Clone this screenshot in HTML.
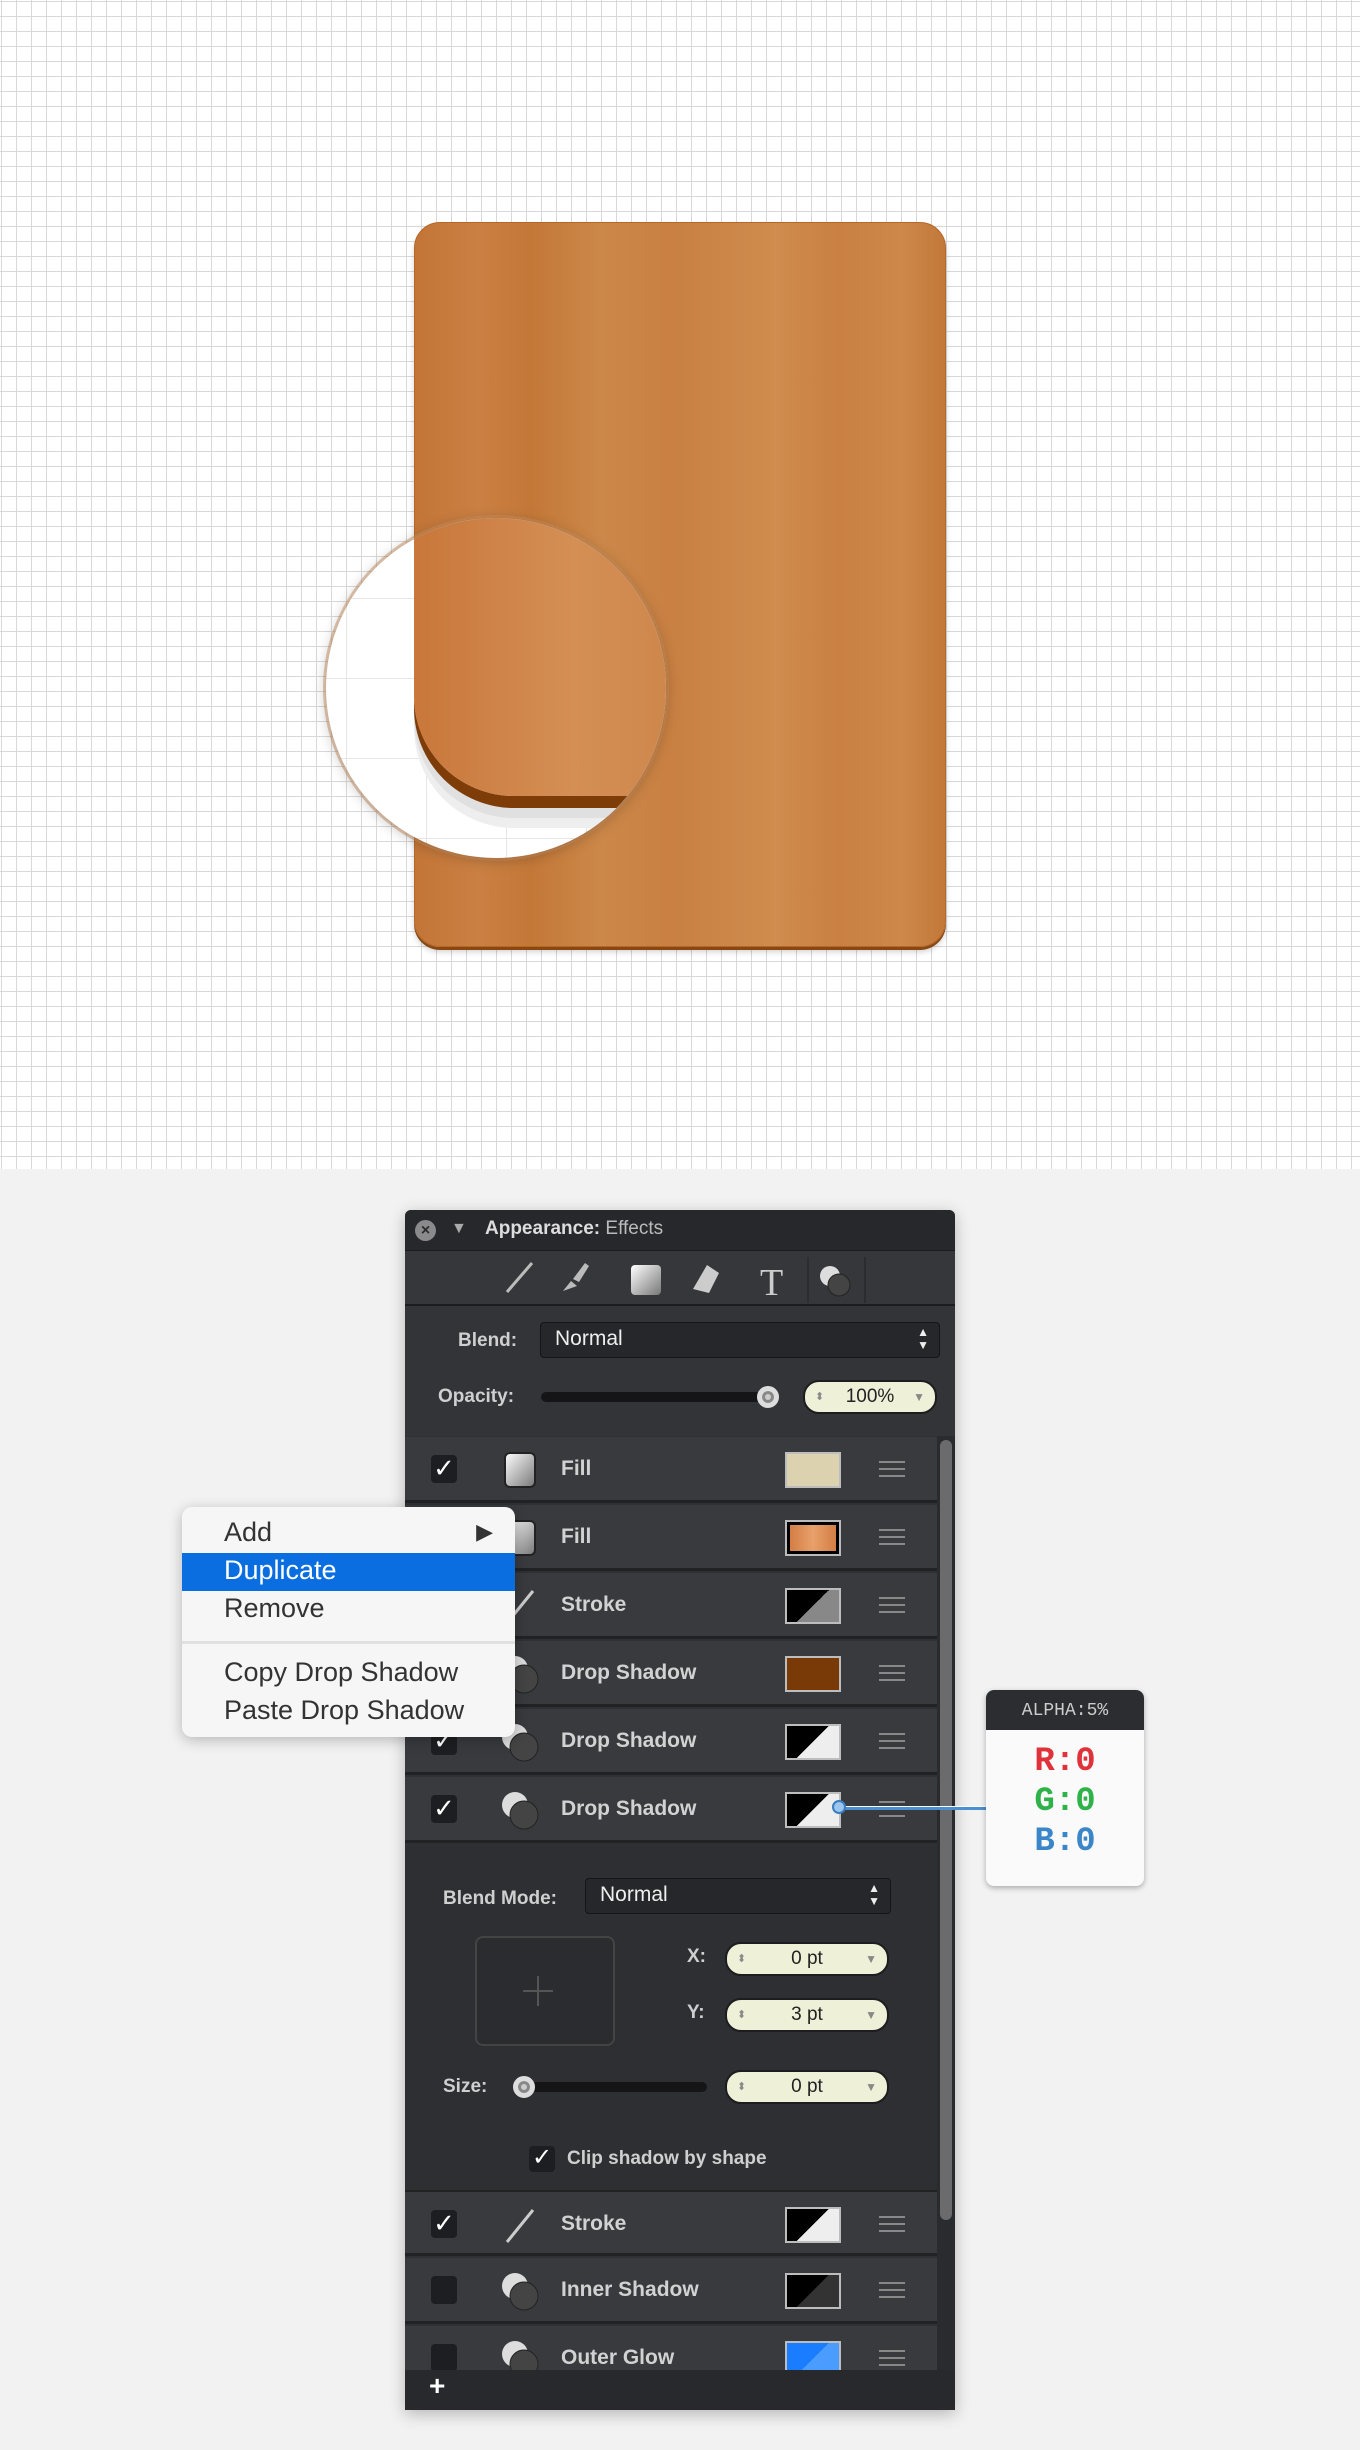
<!DOCTYPE html>
<html><head><meta charset="utf-8"><style>
*{margin:0;padding:0;box-sizing:border-box}
body{width:1360px;height:2450px;position:relative;overflow:hidden;background:#f2f2f2;font-family:"Liberation Sans",sans-serif}
.grid{position:absolute;left:0;top:0;width:1360px;height:1169px;background-color:#fff;
background-image:linear-gradient(to right,#d8d8d8 1px,transparent 1px),linear-gradient(to bottom,#d8d8d8 1px,transparent 1px);
background-size:15px 15px;background-position:1px 1px}
.board{position:absolute;left:414px;top:222px;width:532px;height:725px;border-radius:26px;
background:linear-gradient(90deg,#c27537 0%,#cb8043 12%,#c37838 22%,#cc8849 35%,#c98042 48%,#ca8446 55%,#cf8c4d 68%,#c98042 80%,#cd884a 92%,#c27839 100%);
box-shadow:0 3px 0 #8a4710,0 5px 6px rgba(0,0,0,.18);border:1px solid #b5672a}
.mag{position:absolute;left:326px;top:518px;width:340px;height:340px;border-radius:50%;background-color:#fff;overflow:hidden;
background-image:linear-gradient(to right,#e6e6e6 1px,transparent 1px),linear-gradient(to bottom,#e6e6e6 1px,transparent 1px);background-size:80px 80px;background-position:20px 0;
box-shadow:0 2px 14px rgba(0,0,0,.25),0 0 0 3px rgba(210,150,100,.5)}
.mag .w{position:absolute;left:88px;top:-40px;width:400px;height:318px;border-radius:0 0 0 100px;background:linear-gradient(90deg,#c9773a,#d48f55 40%,#c67a3c);
box-shadow:0 12px 0 #7e3c08,0 22px 0 #e0e0e0,0 32px 0 #eeeeee}
.panel{position:absolute;left:405px;top:1210px;width:550px;height:1200px;background:#2f3034;box-shadow:0 4px 16px rgba(0,0,0,.25);border-radius:6px 6px 0 0;overflow:hidden}
.tb{position:absolute;left:0;top:0;width:550px;height:40px;background:#27282b;color:#ddd;font-size:19px}
.tools{position:absolute;left:0;top:40px;width:550px;height:56px;background:#36373b;border-top:1px solid #1c1c1e;border-bottom:2px solid #1c1c1e}
.sec{position:absolute;left:0;top:96px;width:550px;height:130px;background:#333438}
.lbl{position:absolute;color:#cfcfcf;font-weight:bold;font-size:19px}
.sel{position:absolute;background:#26272a;border:1px solid #151517;border-radius:4px;color:#eee;font-size:21px;padding:4px 14px}
.pill{position:absolute;background:#eef0d8;border:2px solid #1d1d1f;border-radius:16px;color:#222;font-size:19px;text-align:center;height:34px;line-height:30px}
.row{position:absolute;left:0;width:532px;height:66px;background:#393a3e;border-bottom:3px solid #212224}
.row .cb{position:absolute;left:26px;top:18px;width:26px;height:28px;background:#1d1e21;border-radius:4px;color:#fff;font-size:26px;line-height:26px;text-align:center}
.row .t{position:absolute;left:156px;top:20px;color:#d2d2d2;font-weight:bold;font-size:21px}
.row .sw{position:absolute;left:380px;top:15px;width:56px;height:36px;border:2px solid #bdbdbd;background:#000}
.row .hd{position:absolute;left:474px;top:24px;width:26px;height:16px;border-top:2px solid #888;border-bottom:2px solid #888}
.row .hd:after{content:"";position:absolute;left:0;top:5px;width:26px;height:2px;background:#888}
.ico{position:absolute;left:94px;top:12px}
.menu{position:absolute;left:182px;top:1507px;width:333px;height:230px;background:#f6f6f6;border-radius:10px;box-shadow:0 3px 14px rgba(0,0,0,.25);font-size:27px;color:#333}
.menu div{position:absolute;left:42px}
</style></head><body>
<div class="grid"></div>
<div class="board"></div>
<div class="mag"><div class="w"></div></div>

<svg width="0" height="0" style="position:absolute"><defs><linearGradient id="g" x1="0" y1="0" x2="1" y2="1"><stop offset="0" stop-color="#fff"/><stop offset="1" stop-color="#777"/></linearGradient></defs></svg>

<div class="panel">
 <div class="tb">
  <div style="position:absolute;left:10px;top:10px;width:21px;height:21px;border-radius:50%;background:#8a8a8d;color:#2a2a2d;font-size:16px;line-height:21px;text-align:center;font-weight:bold">×</div>
  <div style="position:absolute;left:46px;top:10px;color:#aaa;font-size:16px">▼</div>
  <div style="position:absolute;left:80px;top:8px"><b style="color:#ddd">Appearance:</b> <span style="color:#bbb">Effects</span></div>
 </div>
 <div class="tools">
  <svg width="550" height="56">
   <line x1="102" y1="41" x2="127" y2="12" stroke="#bbb" stroke-width="3"/>
   <path d="M158 40 l8-10 l6 5 z M168 28 l12-16 l4 3 l-10 16z" fill="#bbb"/>
   <rect x="226" y="14" width="30" height="30" rx="4" fill="url(#g)"/>
   <path d="M288 38 l14-24 l12 8 l-10 20 z" fill="#ccc"/>
   <text x="355" y="44" font-family="Liberation Serif" font-size="38" fill="#ccc">T</text>
   <line x1="403" y1="6" x2="403" y2="52" stroke="#222"/><line x1="460" y1="6" x2="460" y2="52" stroke="#222"/>
   <circle cx="425" cy="25" r="10" fill="#ddd"/><circle cx="434" cy="34" r="11" fill="#444" stroke="#222"/>
  </svg>
 </div>
 <div class="sec">
  <div class="lbl" style="left:53px;top:24px">Blend:</div>
  <div class="sel" style="left:135px;top:16px;width:400px;height:36px">Normal<span style="position:absolute;right:10px;top:3px;font-size:12px;line-height:13px">▲<br>▼</span></div>
  <div class="lbl" style="left:33px;top:80px">Opacity:</div>
  <div style="position:absolute;left:136px;top:86px;width:230px;height:10px;border-radius:5px;background:#151517"></div>
  <div style="position:absolute;left:352px;top:80px;width:22px;height:22px;border-radius:50%;background:#ccc;border:5px solid #ddd;box-shadow:inset 0 0 0 3px #888"></div>
  <div class="pill" style="left:398px;top:74px;width:134px">100%<span style="position:absolute;left:10px;font-size:11px;color:#888">⬍</span><span style="position:absolute;right:10px;font-size:12px;color:#888">▼</span></div>
 </div>

 <div class="row" style="top:227px"><div class="cb">✓</div><svg class="ico" width="44" height="44"><rect x="6" y="4" width="30" height="34" rx="5" fill="url(#g)" stroke="#222" stroke-width="2"/></svg><div class="t">Fill</div><div class="sw" style="background:#dcd2b0"></div><div class="hd"></div></div>
 <div class="row" style="top:295px"><div class="cb">✓</div><svg class="ico" width="44" height="44"><rect x="6" y="4" width="30" height="34" rx="5" fill="url(#g)" stroke="#222" stroke-width="2"/></svg><div class="t">Fill</div><div class="sw" style="background:linear-gradient(90deg,#d07a40,#e9a06a,#d07a40);border-color:#bbb;box-shadow:inset 0 0 0 3px #000"></div><div class="hd"></div></div>
 <div class="row" style="top:363px"><div class="cb">✓</div><svg class="ico" width="44" height="44"><line x1="8" y1="38" x2="34" y2="6" stroke="#ccc" stroke-width="3"/></svg><div class="t">Stroke</div><div class="sw" style="background:linear-gradient(135deg,#000 50%,#888 50%)"></div><div class="hd"></div></div>
 <div class="row" style="top:431px"><div class="cb">✓</div><svg class="ico" width="44" height="44"><circle cx="16" cy="16" r="13" fill="#ddd"/><circle cx="25" cy="26" r="14" fill="#444" stroke="#222"/></svg><div class="t">Drop Shadow</div><div class="sw" style="background:#7a3a08"></div><div class="hd"></div></div>
 <div class="row" style="top:499px"><div class="cb">✓</div><svg class="ico" width="44" height="44"><circle cx="16" cy="16" r="13" fill="#ddd"/><circle cx="25" cy="26" r="14" fill="#444" stroke="#222"/></svg><div class="t">Drop Shadow</div><div class="sw" style="background:linear-gradient(135deg,#000 50%,#eee 50%)"></div><div class="hd"></div></div>
 <div class="row" style="top:567px"><div class="cb">✓</div><svg class="ico" width="44" height="44"><circle cx="16" cy="16" r="13" fill="#ddd"/><circle cx="25" cy="26" r="14" fill="#444" stroke="#222"/></svg><div class="t">Drop Shadow</div><div class="sw" style="background:linear-gradient(135deg,#000 50%,#eee 50%)"></div><div class="hd"></div></div>

 <div style="position:absolute;left:0;top:636px;width:532px;height:346px;background:#2e2f33">
  <div class="lbl" style="left:38px;top:42px">Blend Mode:</div>
  <div class="sel" style="left:180px;top:32px;width:306px;height:36px">Normal<span style="position:absolute;right:10px;top:3px;font-size:12px;line-height:13px">▲<br>▼</span></div>
  <div style="position:absolute;left:70px;top:90px;width:140px;height:110px;border:2px solid #444;border-radius:8px;background:#2b2c30"></div>
  <div style="position:absolute;left:132px;top:130px;width:2px;height:30px;background:#555"></div>
  <div style="position:absolute;left:118px;top:144px;width:30px;height:2px;background:#555"></div>
  <div class="lbl" style="left:282px;top:100px">X:</div>
  <div class="pill" style="left:320px;top:96px;width:164px">0 pt<span style="position:absolute;left:10px;font-size:11px;color:#888">⬍</span><span style="position:absolute;right:10px;font-size:12px;color:#888">▼</span></div>
  <div class="lbl" style="left:282px;top:156px">Y:</div>
  <div class="pill" style="left:320px;top:152px;width:164px">3 pt<span style="position:absolute;left:10px;font-size:11px;color:#888">⬍</span><span style="position:absolute;right:10px;font-size:12px;color:#888">▼</span></div>
  <div class="lbl" style="left:38px;top:230px">Size:</div>
  <div style="position:absolute;left:112px;top:236px;width:190px;height:10px;border-radius:5px;background:#151517"></div>
  <div style="position:absolute;left:108px;top:230px;width:22px;height:22px;border-radius:50%;background:#ccc;border:5px solid #ddd;box-shadow:inset 0 0 0 3px #888"></div>
  <div class="pill" style="left:320px;top:224px;width:164px">0 pt<span style="position:absolute;left:10px;font-size:11px;color:#888">⬍</span><span style="position:absolute;right:10px;font-size:12px;color:#888">▼</span></div>
  <div style="position:absolute;left:124px;top:300px;width:26px;height:26px;background:#1d1e21;border-radius:4px;color:#fff;font-size:24px;line-height:24px;text-align:center">✓</div>
  <div class="lbl" style="left:162px;top:302px">Clip shadow by shape</div>
 </div>

 <div class="row" style="top:980px;border-top:2px solid #222"><div class="cb">✓</div><svg class="ico" width="44" height="44"><line x1="8" y1="38" x2="34" y2="6" stroke="#ccc" stroke-width="3"/></svg><div class="t">Stroke</div><div class="sw" style="background:linear-gradient(135deg,#000 50%,#eee 50%)"></div><div class="hd"></div></div>
 <div class="row" style="top:1048px"><div class="cb"></div><svg class="ico" width="44" height="44"><circle cx="16" cy="16" r="13" fill="#ddd"/><circle cx="25" cy="26" r="14" fill="#444" stroke="#222"/></svg><div class="t">Inner Shadow</div><div class="sw" style="background:linear-gradient(135deg,#000 50%,#333 50%)"></div><div class="hd"></div></div>
 <div class="row" style="top:1116px"><div class="cb"></div><svg class="ico" width="44" height="44"><circle cx="16" cy="16" r="13" fill="#ddd"/><circle cx="25" cy="26" r="14" fill="#444" stroke="#222"/></svg><div class="t">Outer Glow</div><div class="sw" style="background:linear-gradient(135deg,#1a7cff 50%,#4a9cff 50%)"></div><div class="hd"></div></div>

 <div style="position:absolute;left:532px;top:226px;width:18px;height:934px;background:#2a2b2e"><div style="position:absolute;left:3px;top:4px;width:12px;height:780px;border-radius:6px;background:#6b6b6e"></div></div>
 <div style="position:absolute;left:0;top:1160px;width:550px;height:40px;background:#28292c;color:#fff;font-size:28px;font-weight:bold"><span style="position:absolute;left:24px;top:0">+</span></div>
</div>

<div style="position:absolute;left:839px;top:1806px;width:147px;height:4px;background:#4b8fd0;border-top:1px solid #fff"></div>
<div style="position:absolute;left:832px;top:1800px;width:14px;height:14px;border-radius:50%;background:#9cc6ee;border:2px solid #3a7cc0"></div>

<div class="menu">
 <div style="top:10px">Add</div><span style="position:absolute;right:22px;top:12px;font-size:22px;color:#333">▶</span>
 <div style="left:0;top:46px;width:333px;height:38px;background:#0a6ee0"></div>
 <div style="top:48px;color:#fff">Duplicate</div>
 <div style="top:86px">Remove</div>
 <div style="left:0;top:134px;width:333px;height:3px;background:#e0e0e0"></div>
 <div style="top:150px">Copy Drop Shadow</div>
 <div style="top:188px">Paste Drop Shadow</div>
</div>

<div style="position:absolute;left:986px;top:1690px;width:158px;height:196px;border-radius:8px;background:#fafafa;box-shadow:0 2px 6px rgba(0,0,0,.3)">
 <div style="height:40px;background:#2c2d30;border-radius:8px 8px 0 0;color:#ccc;font-family:'Liberation Mono',monospace;font-size:18px;text-align:center;line-height:42px">ALPHA:5%</div>
 <div style="font-family:'Liberation Mono',monospace;font-weight:bold;font-size:34px;line-height:40px;text-align:center;margin-top:12px">
  <div style="color:#e0323a">R:0</div><div style="color:#2fb24a">G:0</div><div style="color:#3a86c8">B:0</div>
 </div>
</div>
</body></html>
